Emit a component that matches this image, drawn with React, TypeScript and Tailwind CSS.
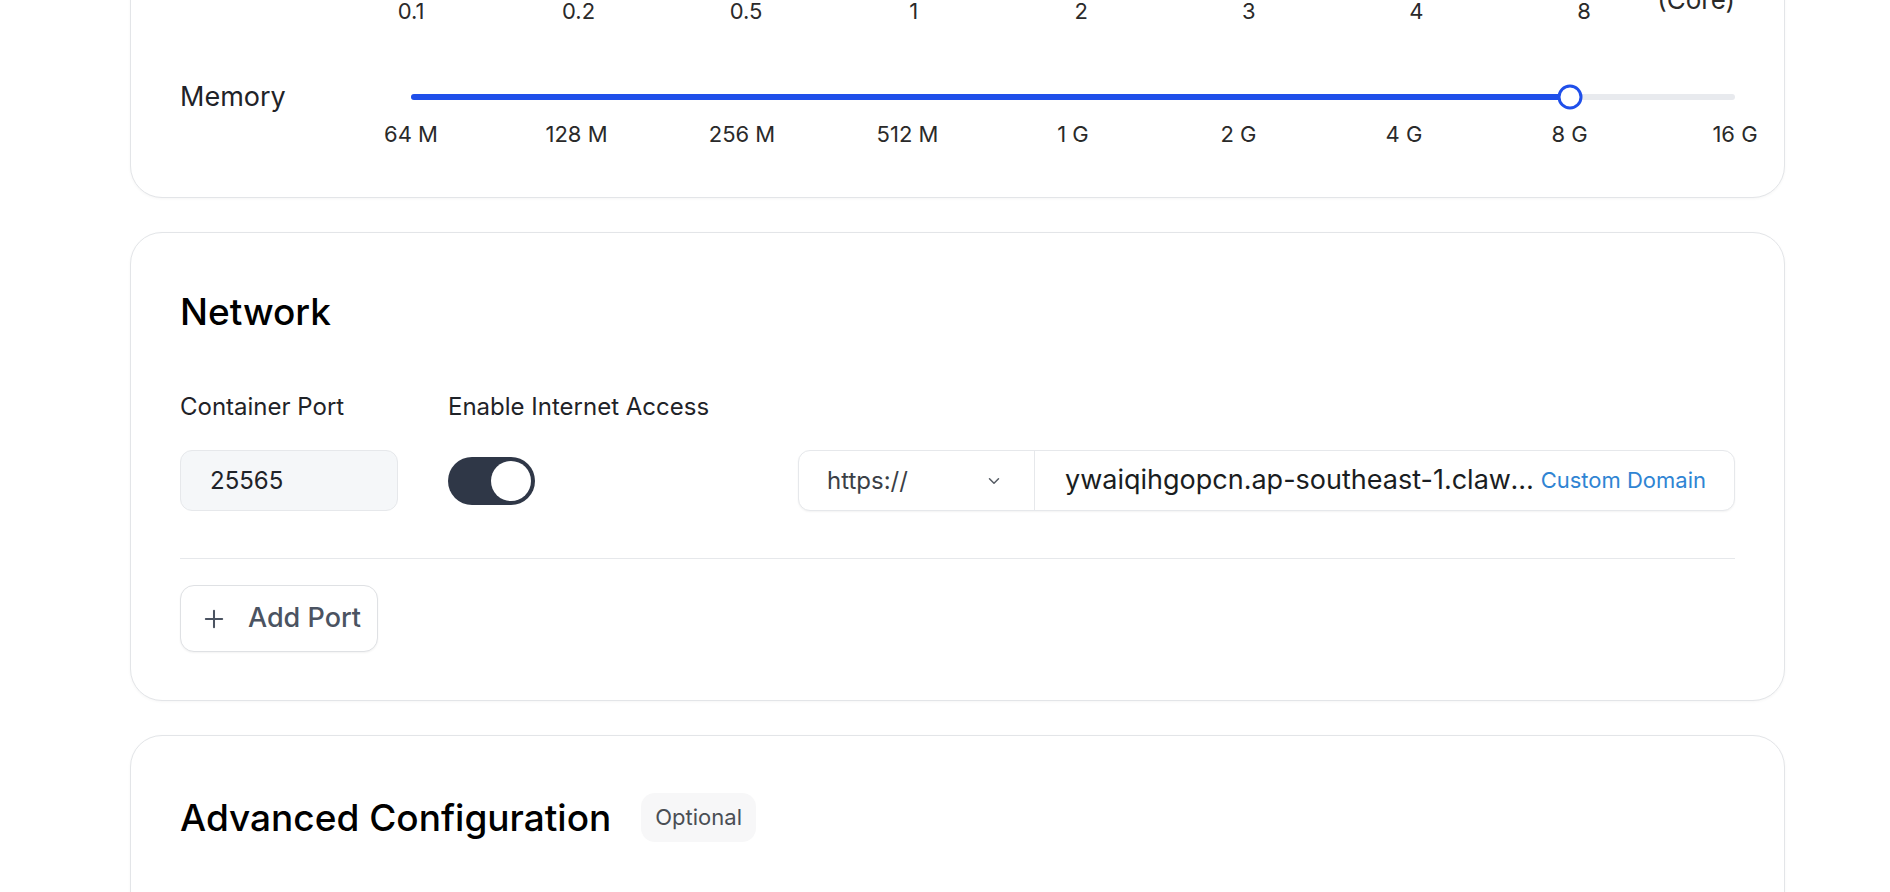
import { ChevronDown, Plus } from 'lucide-react';

const CPU_MARKS = ['0.1', '0.2', '0.5', '1', '2', '3', '4', '8'];
const MEM_MARKS = ['64 M', '128 M', '256 M', '512 M', '1 G', '2 G', '4 G', '8 G', '16 G'];

function Marks({ items }: { items: string[] }) {
  return (
    <div className="flex justify-between">
      {items.map((m) => (
        <div key={m} className="w-0 flex justify-center">
          <span className="whitespace-nowrap text-[22px] leading-[28px] text-[#2a2a2a]">{m}</span>
        </div>
      ))}
    </div>
  );
}

function Track({ pct }: { pct: number }) {
  return (
    <div className="h-[24px] flex items-center">
      <div className="relative w-full h-[6px] rounded-full bg-[#e8eaee]">
        <div className="h-full rounded-full bg-[#1f4fea]" style={{ width: `${pct}%` }} />
        <div
          className="absolute top-1/2 w-[25px] h-[25px] -translate-x-1/2 -translate-y-1/2 rounded-full border-[3px] border-[#1f4fea] bg-white"
          style={{ left: `${pct}%` }}
        />
      </div>
    </div>
  );
}

function Card({ children, className = '' }: { children: React.ReactNode; className?: string }) {
  return (
    <div
      className={`rounded-[32px] border border-[#e3e5e8] bg-white px-[49px] shadow-[0_1px_3px_rgba(0,0,0,0.04)] ${className}`}
    >
      {children}
    </div>
  );
}

export default function App() {
  return (
    <div className="h-screen w-full overflow-hidden bg-white font-['Inter',sans-serif] text-[#1f2328]">
      <div className="-mt-[89px] pl-[130px] pr-[105px] flex flex-col gap-[34px]">
        {/* Resources */}
        <Card className="pt-[48px] pb-[49px]">
          <div className="flex">
            <div className="w-[231px] h-[24px] flex items-center text-[27px]">CPU</div>
            <div className="flex-1">
              <div className="w-[1173px]">
                <Track pct={100} />
              </div>
              <div className="mt-[13px] h-[28px] flex items-end">
                <div className="w-[1173px]">
                  <Marks items={CPU_MARKS} />
                </div>
                <span className="ml-auto mb-[11px] text-[26px] leading-[28px] text-[#2a2a2a]">(Core)</span>
              </div>
            </div>
          </div>

          <div className="mt-[60px] flex">
            <div className="w-[231px] h-[24px] flex items-center text-[27px] text-[#1f2328]">Memory</div>
            <div className="flex-1">
              <Track pct={87.5} />
              <div className="mt-[11px]">
                <Marks items={MEM_MARKS} />
              </div>
            </div>
          </div>
        </Card>

        {/* Network */}
        <Card className="pt-[57px] pb-[48px]">
          <h2 className="text-[37px] leading-[44px] font-medium text-black">Network</h2>

          <div className="mt-[59px] flex items-end gap-[50px]">
            <div className="w-[218px]">
              <div className="text-[24px] leading-[28px] text-[#1f2328]">Container Port</div>
              <div className="mt-[29px] h-[61px] flex items-center rounded-[12px] border border-[#e6e8eb] bg-[#f5f7f9] px-[29px] text-[24px] text-[#1f2328]">
                25565
              </div>
            </div>

            <div className="w-[300px]">
              <div className="text-[24px] leading-[28px] text-[#1f2328]">Enable Internet Access</div>
              <div className="mt-[29px] h-[61px] flex items-center">
                <div className="w-[87px] h-[48px] rounded-full bg-[#2f3747] p-[4px] flex justify-end">
                  <div className="w-[40px] h-[40px] rounded-full bg-white" />
                </div>
              </div>
            </div>

            <div className="flex-1 min-w-0 h-[61px] flex rounded-[12px] border border-[#e6e8eb] bg-white shadow-[0_1px_2px_rgba(0,0,0,0.05)]">
              <div className="w-[236px] shrink-0 flex items-center justify-between border-r border-[#e6e8eb] pl-[28px] pr-[31px]">
                <span className="text-[24px] text-[#3b3f46]">https://</span>
                <ChevronDown size={18} strokeWidth={2} className="text-[#555b63]" />
              </div>
              <div className="flex-1 min-w-0 flex items-center pl-[30px] pr-[28px]">
                <span className="flex-1 min-w-0 truncate text-[27px] text-[#1a1d21]">
                  ywaiqihgopcn.ap-southeast-1.clawcloudrun.com
                </span>
                <span className="ml-[4px] shrink-0 text-[22px] text-[#2f84d3]">Custom Domain</span>
              </div>
            </div>
          </div>

          <div className="mt-[47px] h-px bg-[#e6e8eb]" />

          <div className="mt-[26px]">
            <button className="h-[67px] w-[198px] flex items-center gap-[20px] rounded-[14px] border border-[#dfe1e4] bg-white pl-[19px] shadow-[0_1px_2px_rgba(0,0,0,0.05)]">
              <Plus size={28} strokeWidth={1.75} className="text-[#4b5361]" />
              <span className="text-[27px] font-medium text-[#4b5361]">Add Port</span>
            </button>
          </div>
        </Card>

        {/* Advanced */}
        <Card className="pt-[57px] pb-[200px]">
          <div className="flex items-center gap-[30px]">
            <h2 className="text-[37px] leading-[44px] font-medium text-black">Advanced Configuration</h2>
            <span className="h-[49px] flex items-center rounded-[14px] bg-[#f7f7f8] px-[14px] text-[22px] text-[#4a4e54]">
              Optional
            </span>
          </div>
        </Card>
      </div>
    </div>
  );
}
